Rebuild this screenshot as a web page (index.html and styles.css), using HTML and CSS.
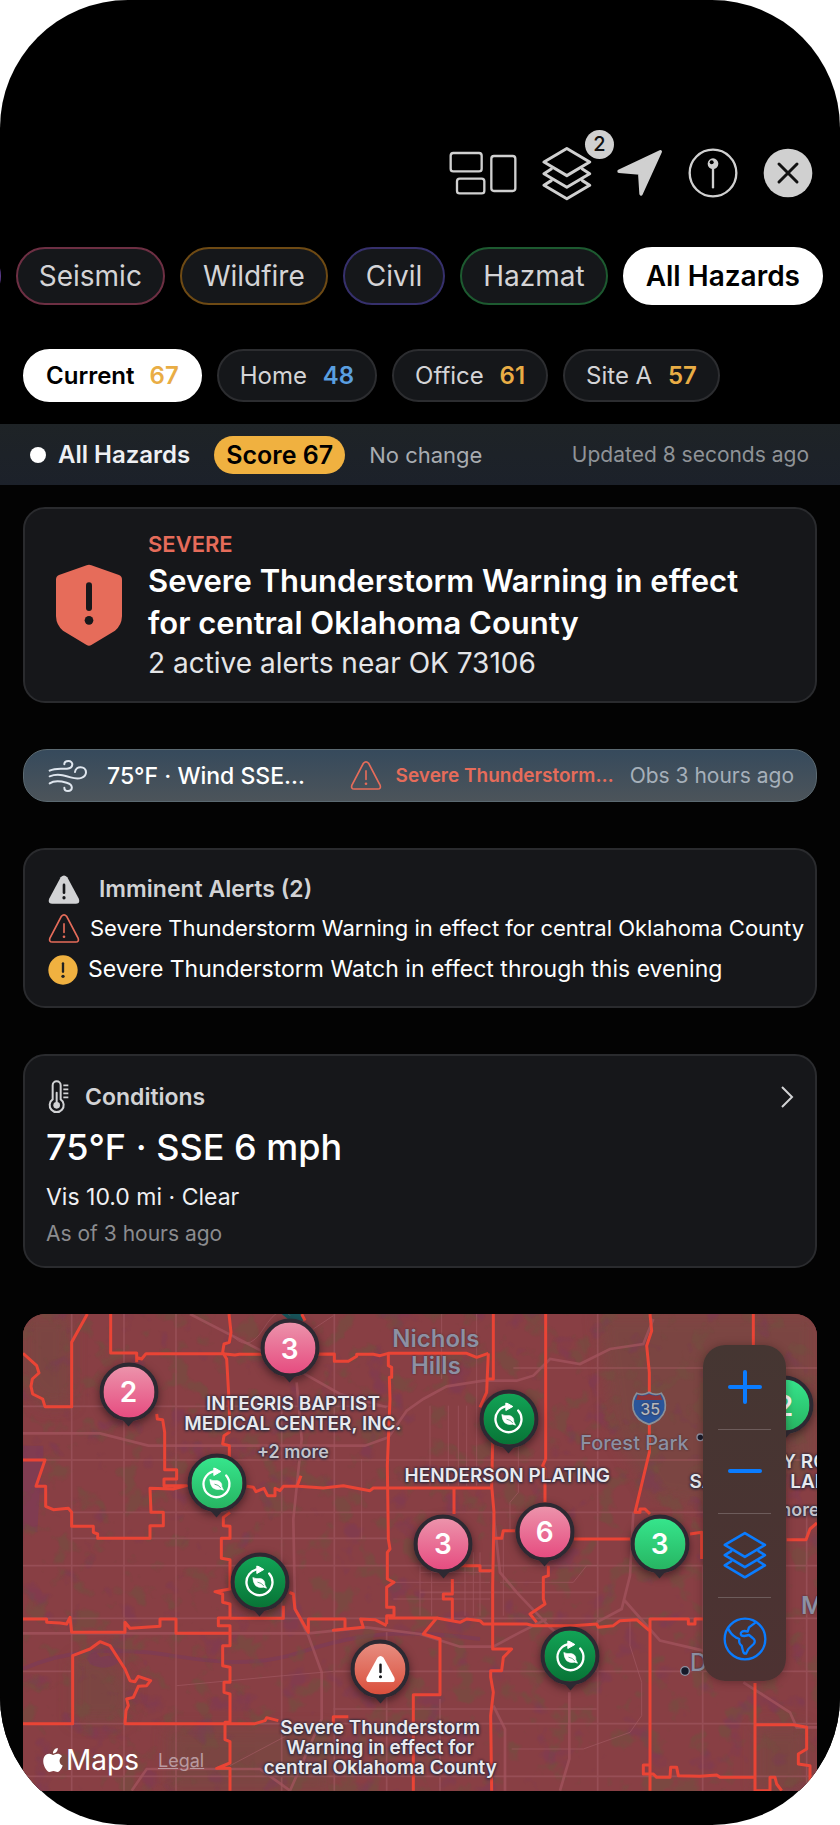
FILE: index.html
```html
<!DOCTYPE html>
<html lang="en">
<head>
    <meta charset="UTF-8">
    <meta name="viewport" content="width=device-width, initial-scale=1.0">
    <title>All Hazards</title>
    <link rel="stylesheet" href="styles.css">
</head>
<body>

<!-- Shared icons -->
<svg class="defs" width="0" height="0" aria-hidden="true">
    <symbol id="layers" viewBox="336 105 151 165">
        <g fill="none" stroke="currentColor" stroke-width="9" stroke-linejoin="round" stroke-linecap="round">
            <path d="M411 112L480 153L411 194L342 153Z"/>
            <path d="M364 174L342 188L411 229L480 188L458 174"/>
            <path d="M364 209L342 223L411 264L480 223L458 209"/>
        </g>
    </symbol>
    <symbol id="triangle" viewBox="0 0 96 88">
        <path d="M40 7Q48 -1 56 7L91 74Q94 85 84 85H12Q2 85 5 74Z" fill="none" stroke="currentColor" stroke-width="5"/>
        <path d="M48 30V56" stroke="currentColor" stroke-width="5" stroke-linecap="round"/>
        <circle cx="48" cy="69" r="4" fill="currentColor"/>
    </symbol>
    <symbol id="triangle-fill" viewBox="0 0 96 88">
        <path d="M38 7Q48 -4 58 7L93 72Q98 87 84 87H12Q-2 87 3 72Z" fill="currentColor"/>
        <path class="mark" d="M48 30V54" stroke-width="8" stroke-linecap="round"/>
        <circle class="mark" cx="48" cy="69" r="3" stroke-width="4"/>
    </symbol>
    <symbol id="leaf" viewBox="603 507 96 96">
        <path d="M680 531A39 39 0 1 1 651 518" fill="none" stroke="#fff" stroke-width="7" stroke-linecap="round"/>
        <path d="M643 507L664 519L643 531Z" fill="#fff" stroke="#fff" stroke-width="3" stroke-linejoin="round"/>
        <path d="M631 543Q640 548 652 546Q668 548 667 565L672 575L663 572Q650 576 640 568Q632 560 631 543Z" fill="#fff" stroke="#fff" stroke-width="2"/>
        <path d="M645 557Q657 559 664 568" fill="none" stroke="#118a48" stroke-width="2"/>
    </symbol>
</svg>

<main class="screen">

    <!-- Toolbar -->
    <header class="toolbar">
        <button class="tool" aria-label="Dashboard">
            <svg width="68" height="44" viewBox="52 121 204 132" fill="none" stroke="currentColor" stroke-width="7">
                <rect x="57" y="127" width="93" height="55" rx="8"/>
                <rect x="76" y="204" width="82" height="44" rx="8"/>
                <rect x="179" y="136" width="72" height="105" rx="8"/>
            </svg>
        </button>
        <button class="tool" aria-label="Layers">
            <svg width="50" height="55"><use href="#layers"/></svg>
            <span class="badge">2</span>
        </button>
        <button class="tool" aria-label="Locate me">
            <svg width="46" height="48" viewBox="562 118 138 144">
                <path d="M692 126L634 253L630 190L568 185Z" fill="currentColor" stroke="currentColor" stroke-width="10" stroke-linejoin="round"/>
            </svg>
        </button>
        <button class="tool" aria-label="Pins">
            <svg width="50" height="50" viewBox="779 114 150 150">
                <circle cx="854" cy="189" r="70" fill="none" stroke="currentColor" stroke-width="7"/>
                <path d="M854 170V232" stroke="currentColor" stroke-width="7" stroke-linecap="round"/>
                <circle cx="854" cy="161" r="16" fill="currentColor"/>
                <circle cx="850" cy="157" r="6" fill="#000"/>
            </svg>
        </button>
        <button class="tool" aria-label="Close">
            <svg width="50" height="50" viewBox="999 114 150 150">
                <circle cx="1074" cy="189" r="73" fill="currentColor"/>
                <path d="M1047 162L1101 216M1101 162L1047 216" stroke="#111" stroke-width="9" stroke-linecap="round"/>
            </svg>
        </button>
    </header>

    <!-- Hazard filters -->
    <nav class="chips hazards" aria-label="Hazards">
        <button class="chip purple" aria-label="Previous hazard"></button>
        <button class="chip rose">Seismic</button>
        <button class="chip amber">Wildfire</button>
        <button class="chip indigo">Civil</button>
        <button class="chip green">Hazmat</button>
        <button class="chip active">All Hazards</button>
    </nav>

    <!-- Saved places -->
    <nav class="chips places" aria-label="Places">
        <button class="chip active">Current <b>67</b></button>
        <button class="chip">Home <b class="low">48</b></button>
        <button class="chip">Office <b>61</b></button>
        <button class="chip">Site A <b>57</b></button>
    </nav>

    <div class="status">
        <span class="dot"></span>
        <strong>All Hazards</strong>
        <span class="score">Score 67</span>
        <span class="change">No change</span>
        <span class="updated">Updated 8 seconds ago</span>
    </div>

    <div class="feed">

        <section class="card severe">
            <svg class="shield" width="68" height="83" viewBox="0 0 204 249">
                <path d="M95 4Q102 1 109 4L192 33Q201 37 201 47V157Q200 184 180 200L109 243Q102 248 95 243L24 200Q4 184 3 157V47Q3 37 12 33Z" fill="currentColor"/>
                <path d="M102 64V132" stroke="#17181b" stroke-width="18" stroke-linecap="round"/>
                <circle cx="102" cy="169" r="13" fill="#17181b"/>
            </svg>
            <div>
                <p class="level">SEVERE</p>
                <h1>Severe Thunderstorm Warning in effect for central Oklahoma County</h1>
                <p class="near">2 active alerts near OK 73106</p>
            </div>
        </section>

        <section class="strip">
            <svg width="40" height="34" viewBox="147 121 120 102" fill="none" stroke="currentColor" stroke-width="6" stroke-linecap="round">
                <path d="M152 156C170 147 186 151 204 150C225 148 224 127 208 127C201 127 196 131 196 137"/>
                <path d="M152 173C175 164 195 170 215 176C240 183 261 178 261 161C261 141 230 140 228 160"/>
                <path d="M152 194C165 185 185 187 203 192C225 198 221 217 207 217C200 217 196 213 196 207"/>
            </svg>
            <span class="temp">75°F · Wind SSE…</span>
            <svg class="red" width="32" height="29"><use href="#triangle"/></svg>
            <span class="warn">Severe Thunderstorm…</span>
            <span class="obs">Obs 3 hours ago</span>
        </section>

        <section class="card imminent">
            <h2><svg width="32" height="29"><use href="#triangle-fill"/></svg>Imminent Alerts (2)</h2>
            <ul>
                <li><svg class="red" width="32" height="29"><use href="#triangle"/></svg>Severe Thunderstorm Warning in effect for central Oklahoma County</li>
                <li class="watch">
                    <svg width="30" height="30" viewBox="0 0 90 90">
                        <circle cx="45" cy="45" r="44" fill="#f0b140"/>
                        <path d="M45 25V50" stroke="#222" stroke-width="7" stroke-linecap="round"/>
                        <circle cx="45" cy="64" r="5" fill="#222"/>
                    </svg>Severe Thunderstorm Watch in effect through this evening
                </li>
            </ul>
        </section>

        <section class="card conditions">
            <h2>
                <svg width="22" height="34" viewBox="147 125 66 102" fill="none" stroke="currentColor" stroke-width="6">
                    <path d="M161 183V141A12 12 0 0 1 185 141V183A21 21 0 1 1 161 183Z"/>
                    <path d="M173 163V195" stroke-linecap="round"/>
                    <circle cx="173" cy="201" r="10" fill="currentColor" stroke="none"/>
                    <path d="M193 141H208M193 153H208M193 165H208M193 177H208" stroke-width="5"/>
                </svg>
                Conditions
                <svg class="chevron" width="14" height="24" viewBox="0 0 14 24" fill="none" stroke="currentColor" stroke-width="2">
                    <path d="M2 2L12 12L2 22"/>
                </svg>
            </h2>
            <p class="reading">75°F · SSE 6 mph</p>
            <p class="vis">Vis 10.0 mi · Clear</p>
            <p class="asof">As of 3 hours ago</p>
        </section>

        <section class="map" aria-label="Map">
            <svg class="tiles" viewBox="69 45 2382 1431" preserveAspectRatio="xMidYMid slice" aria-hidden="true">
                <defs>
                    <filter id="land" x="0" y="0" width="100%" height="100%" color-interpolation-filters="sRGB">
                        <feTurbulence type="fractalNoise" baseFrequency="0.014" numOctaves="3" seed="7"/>
                        <feColorMatrix values="0 0 0 0 0.45  0 0 0 0 0.31  0 0 0 0 0.25  7 0 0 0 -3.9"/>
                    </filter>
                    <filter id="water" x="0" y="0" width="100%" height="100%" color-interpolation-filters="sRGB">
                        <feTurbulence type="fractalNoise" baseFrequency="0.012" numOctaves="3" seed="21"/>
                        <feColorMatrix values="0 0 0 0 0.48  0 0 0 0 0.22  0 0 0 0 0.36  0 7 0 0 -4.4"/>
                    </filter>
                    <filter id="soft"><feGaussianBlur stdDeviation="22"/></filter>
                </defs>
                <rect x="69" y="45" width="2382" height="1431" fill="#883f44"/>

                <!-- parks and water -->
                <g fill="#774a42" opacity=".7" filter="url(#soft)">
                    <path d="M69 45H215V320H120L69 260Z"/>
                    <path d="M1790 45H2451V480L2250 640L1960 600L1840 400Z"/>
                    <path d="M2270 1280H2420V1475H2270Z"/>
                    <path d="M218 1080L320 1060L400 1180L370 1270H218Z"/>
                    <path d="M500 1290H1000V1475H500Z"/>
                </g>
                <g fill="#7b3a5a" opacity=".6">
                    <path d="M69 440L130 440V485L120 560L112 700L69 690Z"/>
                    <path d="M250 1060Q280 1040 300 1075Q340 1060 355 1090Q320 1120 270 1095Z"/>
                </g>
                <path d="M69 1110C200 1050 330 1050 440 1060S720 1120 900 1060S1200 990 1440 1020" fill="none" stroke="#7b3a5a" stroke-width="12" opacity=".6"/>
                <rect x="69" y="45" width="2382" height="1431" filter="url(#land)" opacity=".6"/>
                <rect x="69" y="45" width="2382" height="1431" filter="url(#water)" opacity=".4"/>
                <path d="M845 45H905L915 65H870Z" fill="#17545a"/>

                <!-- streets -->
                <g fill="none" stroke="#a55c66" stroke-width="5" opacity=".55">
                    <path d="M215 45V1475M372 45V1475M528 45V1475M845 320V1475M1003 45V1475M1160 1000V1475M1320 1200V1475M1793 45V1475M2108 800V1475M2420 640V1475"/>
                    <path d="M69 322H1165M69 483H2451M215 640H2451M215 718H1165M69 800H2451M69 958H2451M1260 880H1790M69 1117H215M1000 1117H2451M69 1274H2451M69 1432H2451M1000 1230H1790M1540 207H2451"/>
                </g>
                <g fill="none" stroke="#a55c66" stroke-width="3" opacity=".6">
                    <path d="M1290 320V560M1325 45V240M1345 320V560M1375 320V560M1400 320V560M1430 45V560M1260 800V950M1295 760V950M1395 760V950M1420 760V950M1440 760V950M1510 700V950M1555 380V580L1530 610V700M1085 480V720"/>
                    <path d="M1180 850H1470M1180 900H1470M1260 820H1470M1500 850H1720L1760 800H1793M1535 1350H1750L1890 1300L1925 1250V1150L1890 1040V960M690 1400L860 1310M530 1160L850 1130L1000 1117M690 100Q740 170 790 90T870 50M940 90L1000 50"/>
                </g>
                <g fill="none" stroke="#a3545e" stroke-width="8" opacity=".75">
                    <path d="M69 403H300L445 440H1095L1165 415L1220 335L1270 300L1340 262L1450 245H1550L1600 230L1650 180L1740 195L1830 150L1930 135L1960 60"/>
                    <path d="M570 45L870 200L1020 285L1160 325M890 250L905 420L880 660L885 930L925 1010L965 1120V1260L870 1475"/>
                    <path d="M69 1003H925L1100 985L1260 1005L1380 1043H1480L1560 1000L1640 960"/>
                    <path d="M1480 640L1500 820L1550 880L1650 985L1690 1020M1900 640L1890 830L1865 930L1790 970M1870 900L1980 1025L2110 1055M1708 1180V1380L1680 1475M1480 1220L1515 1290V1475"/>
                    <path d="M2230 1150L2370 1240L2390 1285H2451M395 1475L440 1410H780L870 1475"/>
                </g>

                <!-- tract boundaries -->
                <g fill="none" stroke="#ea4435" stroke-width="9" stroke-linejoin="round">
                    <path d="M262 45L215 130V323H135L128 300L98 285L93 262L97 240L117 222L110 200L69 163"/>
                    <path d="M332 45V162H410V190M410 175L425 180L438 164H668L705 168L718 166H780L1003 165V187H1045L1070 172V166H1120L1140 170L1165 163H1400L1430 175L1465 163"/>
                    <path d="M687 45L693 100L688 130L672 135L668 160L680 180L688 320V400L672 410L668 435L688 440V480M690 640L670 655V680L690 682V718H664V778L690 782V870L645 878L668 885V910L690 915V957H655V980H690V1040H668V1100L690 1105V1150H672V1180L690 1185V1270H675V1322L690 1328V1392L650 1408H690V1475"/>
                    <path d="M470 345L472 360L488 362L494 400V512H530V540H492V560H560L520 570L450 568L453 640H490V680H450V718H293V705L280 700V682H215V640L205 628L160 632L137 622V562H108L135 483H69"/>
                    <path d="M740 562L760 565L768 578L792 568L803 590H825V568L840 575L850 562H895L970 567L1030 560L1110 575L1120 567H1475M903 530L890 565M905 45L915 65M1362 568V645"/>
                    <path d="M1165 165V200L1175 205V235H1168L1170 300L1162 500L1165 720L1170 750L1162 760V840L1182 850L1160 865V925H1182V950H1160V975"/>
                    <path d="M1465 163L1462 230L1460 280L1440 325M1480 45V240H1462M1478 430L1475 560L1482 640L1478 860V1050H1535L1510 1075L1505 1115H1472V1135L1480 1180L1472 1250L1475 1475"/>
                    <path d="M1637 45V480L1628 500L1635 510V610M1950 45L1955 95L1940 140L1948 220V460L1905 640H1920V630H1935L1950 645M2260 45V140"/>
                    <path d="M1482 718H1505L1510 695H1545M1722 720H1890M2070 705L2105 700V780M2360 722H2418L2430 690L2451 672"/>
                    <path d="M1357 840V885H1330V900H1357V965M1355 800H1440V815H1478M1645 800V830L1630 835V900L1635 915L1590 945L1610 970"/>
                    <path d="M1165 957H1310L1270 1005L1320 1020V1187H1240V1475M1310 957L1380 970L1400 960L1440 965L1450 975H1580L1600 980H1720L1790 975L1795 985L1840 980L1860 965L1910 962L1948 995"/>
                    <path d="M2110 960H2085V975H2065V960H1950V1475M1950 1398H1930V1425H1960L1970 1435H2010L2012 1405H2030L2035 1430L2100 1432L2150 1428L2160 1435H2265"/>
                    <path d="M2265 1152V1475H2310V1435H2325L2330 1455L2345 1475M2265 1277H2380L2420 1285V1350L2395 1365V1395L2430 1400V1475"/>
                    <path d="M69 960H140V970L180 972L200 975L210 955L215 1000H375V970L390 988L480 982V960H528V1003H690M690 958H850V920M868 880L880 885L885 930L925 1000V960H1035V990L1000 994L1090 985L1082 960L1125 962L1160 980"/>
                    <path d="M69 1274H218V1070L270 1050L300 1028L330 1040L375 1110L390 1145L405 1148L415 1132L452 1145L440 1160L415 1162L400 1195L380 1200L385 1220L378 1235L375 1274H765L795 1265L800 1256L835 1265M1000 1275V1253H1045"/>
                </g>

                <!-- interstate shield -->
                <path d="M1910 283Q1930 290 1947 280Q1964 290 1984 283Q2000 305 1995 333Q1985 365 1947 376Q1909 365 1900 333Q1894 305 1910 283Z" fill="#2a559a" stroke="#8a9099" stroke-width="5"/>
                <path d="M1908 303L1913 287Q1930 294 1947 285Q1964 294 1981 287L1987 303Z" fill="#8c3438"/>
                <g fill="#161a2a" stroke="#8d8f9f" stroke-width="4">
                    <circle cx="2101" cy="415" r="10"/>
                    <circle cx="2055" cy="1116" r="13"/>
                </g>
            </svg>

            <span class="place nichols">Nichols<br>Hills</span>
            <span class="place forest">Forest Park</span>
            <span class="place route">35</span>
            <span class="place midwest">M</span>
            <span class="place del">Del City</span>

            <span class="label integris">INTEGRIS BAPTIST<br>MEDICAL CENTER, INC.<small>+2 more</small></span>
            <span class="label henderson">HENDERSON PLATING</span>
            <span class="label mosley">MOSLEY ROAD<br>SANITARY LANDFILL<small>+1 more</small></span>
            <span class="label storm">Severe Thunderstorm<br>Warning in effect for<br>central Oklahoma County</span>

            <span class="pin pink p1">2</span>
            <span class="pin pink p2">3</span>
            <span class="pin mint p3"><svg width="32" height="32"><use href="#leaf"/></svg></span>
            <span class="pin forest-green p4"><svg width="32" height="32"><use href="#leaf"/></svg></span>
            <span class="pin forest-green p5"><svg width="32" height="32"><use href="#leaf"/></svg></span>
            <span class="pin pink p6">3</span>
            <span class="pin pink p7">6</span>
            <span class="pin mint p8">3</span>
            <span class="pin mint p9">2</span>
            <span class="pin forest-green p10"><svg width="32" height="32"><use href="#leaf"/></svg></span>
            <span class="pin coral p11"><svg width="30" height="27"><use href="#triangle-fill"/></svg></span>

            <div class="controls">
                <button aria-label="Zoom in">
                    <svg width="36" height="36" viewBox="0 0 36 36" stroke="currentColor" stroke-width="4" stroke-linecap="round"><path d="M3 18H33M18 3V33"/></svg>
                </button>
                <button aria-label="Zoom out">
                    <svg width="36" height="36" viewBox="0 0 36 36" stroke="currentColor" stroke-width="4" stroke-linecap="round"><path d="M3 18H33"/></svg>
                </button>
                <button aria-label="Map layers">
                    <svg width="44" height="48"><use href="#layers"/></svg>
                </button>
                <button aria-label="Globe">
                    <svg width="44" height="44" viewBox="908 181 132 132" fill="none" stroke="currentColor" stroke-width="7" stroke-linejoin="round">
                        <circle cx="974" cy="247" r="61"/>
                        <path d="M923 214Q930 232 946 242L957 247Q954 260 964 267L968 283Q970 292 977 291L984 277L1000 262Q1008 252 997 244L986 235L972 238Q958 238 962 228Q968 220 982 225L986 212L1006 197"/>
                    </svg>
                </button>
            </div>

            <div class="credit">
                <svg width="20" height="24" viewBox="2 0 20 24" fill="#fff"><path d="M12.152 6.896c-.948 0-2.415-1.078-3.96-1.04-2.04.027-3.91 1.183-4.961 3.014-2.117 3.675-.546 9.103 1.519 12.09 1.013 1.454 2.208 3.09 3.792 3.039 1.52-.065 2.09-.987 3.935-.987 1.831 0 2.35.987 3.96.948 1.637-.026 2.676-1.48 3.676-2.948 1.156-1.688 1.636-3.325 1.662-3.415-.039-.013-3.182-1.221-3.22-4.857-.026-3.04 2.48-4.494 2.597-4.559-1.429-2.09-3.623-2.324-4.39-2.376-2-.156-3.675 1.09-4.61 1.09zM15.53 3.83c.843-1.012 1.4-2.427 1.245-3.83-1.207.052-2.662.805-3.532 1.818-.78.896-1.454 2.338-1.273 3.714 1.338.104 2.715-.688 3.559-1.701"/></svg>
                <span>Maps</span>
                <a href="#legal">Legal</a>
            </div>
        </section>
    </div>
</main>

</body>
</html>
```
FILE: styles.css
```css
* {
    box-sizing: border-box;
}
body {
    margin: 0;
    background: #fff;
    color: #fff;
    font-family: Inter, "Liberation Sans", sans-serif;
    font-size: 22px;
}
p, h1, h2, ul {
    margin: 0;
    padding: 0;
}
ul {
    list-style: none;
}
svg {
    display: block;
    flex: none;
}
button {
    font: inherit;
    color: inherit;
    border: none;
    background: none;
    padding: 0;
    cursor: pointer;
}
.defs {
    position: absolute;
}
.mark {
    fill: #17181b;
    stroke: #17181b;
}
.red {
    color: #e66c5a;
}

.screen {
    min-height: 100vh;
    padding: 145px 0 32px;
    background: #000;
    border-radius: 128px;
    overflow: hidden;
}

/* Toolbar */
.toolbar {
    display: flex;
    justify-content: flex-end;
    align-items: center;
    gap: 25px;
    height: 56px;
    padding-right: 27px;
    color: #d0d0d0;
}
.tool {
    position: relative;
}
.badge {
    position: absolute;
    top: -16px;
    right: -22px;
    width: 29px;
    height: 29px;
    border-radius: 50%;
    background: #d0d0d0;
    color: #111;
    font-size: 20px;
    font-weight: 500;
    line-height: 29px;
    text-align: center;
}

/* Chips */
.chips {
    display: flex;
    gap: 15px;
}
.chip {
    flex: none;
    border: 2px solid #2c2d30;
    border-radius: 30px;
    background: #15171a;
    color: #d4d4d6;
    white-space: nowrap;
}
.hazards {
    justify-content: flex-end;
    margin-top: 46px;
    padding-right: 17px;
    overflow: hidden;
    font-size: 28px;
}
.hazards .chip {
    height: 58px;
    padding: 0 21px;
}
.places {
    margin-top: 44px;
    padding-left: 23px;
    font-size: 24px;
}
.places .chip {
    height: 53px;
    padding: 0 21px;
}
.places b {
    margin-left: 9px;
    color: #e9ad45;
    font-weight: 600;
}
.places .low {
    color: #5a9fe0;
}
.chips .active {
    background: #fff;
    border-color: #fff;
    color: #000;
    font-weight: 600;
}
.hazards .purple {
    width: 100px;
    border-color: #5c3a8c;
}
.hazards .rose {
    border-color: #6d2f43;
}
.hazards .amber {
    border-color: #6e4a14;
}
.hazards .indigo {
    border-color: #36306c;
}
.hazards .green {
    border-color: #1d5a30;
}

/* Status bar */
.status {
    display: flex;
    align-items: center;
    height: 61px;
    margin-top: 22px;
    padding: 0 31px 0 30px;
    background: linear-gradient(#1e2326, #1c212a);
    color: #eef0f3;
}
.dot {
    width: 16px;
    height: 16px;
    margin-right: 12px;
    border-radius: 50%;
    background: #fff;
}
.status strong {
    font-size: 24px;
    font-weight: 600;
}
.score {
    margin: 0 24px;
    padding: 0 12px;
    border-radius: 19px;
    background: #f0b140;
    color: #000;
    font-size: 25px;
    font-weight: 600;
    line-height: 38px;
}
.change {
    color: #a9adb1;
}
.updated {
    margin-left: auto;
    color: #8f9397;
    font-size: 21px;
}

/* Cards */
.feed {
    display: flex;
    flex-direction: column;
    gap: 46px;
    padding: 22px 23px 0;
    background: #030303;
}
.card {
    border: 2px solid #2a2b2e;
    border-radius: 22px;
    background: #16171a;
}
.card h2 {
    display: flex;
    align-items: center;
    color: #d2d3d5;
    font-size: 23px;
    font-weight: 600;
}
.severe {
    display: flex;
    align-items: center;
    gap: 25px;
    min-height: 196px;
    padding: 18px 30px;
}
.shield {
    color: #e66c5a;
}
.level {
    color: #e66c5a;
    font-size: 22px;
    font-weight: 600;
    line-height: 32px;
}
.severe h1 {
    font-size: 31px;
    font-weight: 600;
    line-height: 42px;
}
.near {
    color: #e4e5e7;
    font-size: 28px;
    line-height: 38px;
}
.strip {
    display: flex;
    align-items: center;
    height: 53px;
    padding: 0 22px 0 24px;
    border: 1px solid #5b6971;
    border-radius: 24px;
    background: linear-gradient(#364a5c, #4c545a);
    color: #dfe6ee;
    white-space: nowrap;
}
.temp {
    margin: 0 auto 0 19px;
    color: #fff;
    font-size: 23px;
    font-weight: 500;
}
.warn {
    margin: 0 16px 0 14px;
    color: #e66c5a;
    font-size: 19px;
    font-weight: 600;
}
.obs {
    color: #a6b0ba;
    font-size: 21px;
}
.imminent {
    padding: 20px 23px 16px;
}
.imminent h2 {
    gap: 19px;
    line-height: 38px;
}
.imminent li {
    display: flex;
    align-items: center;
    gap: 10px;
    line-height: 41px;
    white-space: nowrap;
}
.imminent .watch {
    font-size: 23px;
}
.conditions {
    padding: 23px 21px 14px;
}
.conditions h2 {
    gap: 15px;
    padding-left: 2px;
    line-height: 36px;
}
.chevron {
    margin-left: auto;
}
.reading {
    font-size: 36px;
    font-weight: 500;
    line-height: 64px;
}
.vis {
    color: #f0f0f2;
    font-size: 23px;
    line-height: 36px;
}
.asof {
    color: #8b8c8f;
    font-size: 21px;
    line-height: 37px;
}

/* Map */
.map {
    position: relative;
    aspect-ratio: 794 / 477;
    border-radius: 22px;
    background: #883f44;
    overflow: hidden;
}
.tiles {
    width: 100%;
    height: 100%;
}
.place, .label, .pin {
    position: absolute;
    transform: translate(-50%, -50%);
    text-align: center;
    white-space: nowrap;
}
.place {
    color: #8d90a3;
    font-size: 20px;
    font-weight: 500;
    text-shadow: 0 0 2px #3b2a33;
}
.nichols {
    left: 52%;
    top: 8%;
    font-size: 24px;
    font-weight: 600;
    line-height: 27px;
}
.forest {
    left: 77%;
    top: 27%;
}
.route {
    left: 79%;
    top: 20%;
    color: #b4b7bd;
    font-size: 16px;
}
.place.midwest,
.place.del {
    transform: translate(0, -50%);
    font-size: 24px;
}
.midwest {
    left: 98%;
    top: 61%;
    font-weight: 600;
}
.del {
    left: 84%;
    top: 73%;
}
.label {
    color: #e9e9ee;
    font-size: 19px;
    font-weight: 600;
    line-height: 20px;
    text-shadow: 0 0 2px #2c2a3c, 0 0 3px #2c2a3c, 0 1px 3px #2c2a3c;
}
.label small {
    display: block;
    margin-top: 8px;
    color: #c4c3cb;
    font-size: 18px;
}
.integris {
    left: 34%;
    top: 24%;
}
.henderson {
    left: 61%;
    top: 34%;
}
.mosley {
    left: 96%;
    top: 36%;
}
.storm {
    left: 45%;
    top: 91%;
}
.pin {
    display: flex;
    align-items: center;
    justify-content: center;
    width: 59px;
    height: 59px;
    border: 4px solid #2d2932;
    border-radius: 50%;
    color: #fff;
    font-size: 28px;
    font-weight: 600;
    box-shadow: 0 3px 8px rgba(30, 15, 20, .6);
}
.pin::after {
    content: "";
    position: absolute;
    top: 52px;
    border: 7px solid transparent;
    border-top: 8px solid #2d2932;
    border-bottom: none;
}
.pink {
    background: linear-gradient(#ec93ab, #e64c80);
}
.mint {
    background: linear-gradient(#36e58c, #27b562);
}
.forest-green {
    background: linear-gradient(#12a356, #087436);
}
.coral {
    background: linear-gradient(#e78d80, #da4f3c);
}
.coral .mark {
    fill: #da5f4e;
    stroke: #da5f4e;
}
.p1 { left: 13.3%; top: 16.3%; }
.p2 { left: 33.6%; top: 7.2%; }
.p3 { left: 24.4%; top: 35.5%; }
.p4 { left: 29.8%; top: 56.1%; }
.p5 { left: 61.2%; top: 22%; }
.p6 { left: 52.9%; top: 48.2%; }
.p7 { left: 65.7%; top: 45.6%; }
.p8 { left: 80.2%; top: 48.2%; }
.p9 { left: 95.9%; top: 19.1%; }
.p10 { left: 68.9%; top: 71.7%; }
.p11 { left: 45%; top: 74.4%; }

.controls {
    position: absolute;
    top: 31px;
    right: 31px;
    display: flex;
    flex-direction: column;
    width: 83px;
    border-radius: 22px;
    background: linear-gradient(#453632, #4d3232);
    color: #0a7cff;
    box-shadow: 0 1px 8px rgba(40, 20, 20, .4);
}
.controls button {
    position: relative;
    display: flex;
    align-items: center;
    justify-content: center;
    height: 84px;
}
.controls button + button::before {
    content: "";
    position: absolute;
    top: 0;
    left: 15px;
    right: 15px;
    height: 1px;
    background: #6d5c5b;
}
.credit {
    position: absolute;
    left: 20px;
    bottom: 14px;
    display: flex;
    align-items: center;
    gap: 3px;
    font-size: 28px;
}
.credit a {
    margin-left: 16px;
    color: #b99aa0;
    font-size: 18px;
}
```
